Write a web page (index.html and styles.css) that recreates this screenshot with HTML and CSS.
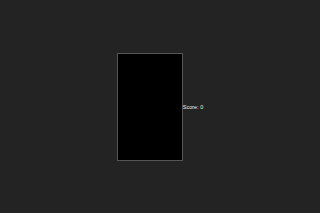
FILE: index.html
```html
<!DOCTYPE html>
<html lang="en">
<head>
  <meta charset="UTF-8" />
  <meta name="viewport" content="width=device-width, initial-scale=1.0"/>
  <title>Tetris</title>
  <link rel="stylesheet" href="styles.css">
</head>
<body>
  <div class="game">
    <canvas id="board" class="board" width="64" height="106"></canvas>
    <div class="score">Score: <span id="score">0</span></div>
  </div>
</body>
</html>
```

FILE: styles.css
```css
html, body {
  height: 100%;
}

body {
  margin: 0;
  background-color: #232323;
  font-family: "Liberation Sans", Arial, sans-serif;
  color: #eee;
}

.game {
  height: 100%;
  display: flex;
  justify-content: center;
  align-items: center;
}

.board {
  display: block;
  width: 64px;
  height: 106px;
  background-color: #000;
  border: 1px solid #555;
}

.score {
  font-size: 5.5px;
  line-height: 8px;
  white-space: nowrap;
}
```
